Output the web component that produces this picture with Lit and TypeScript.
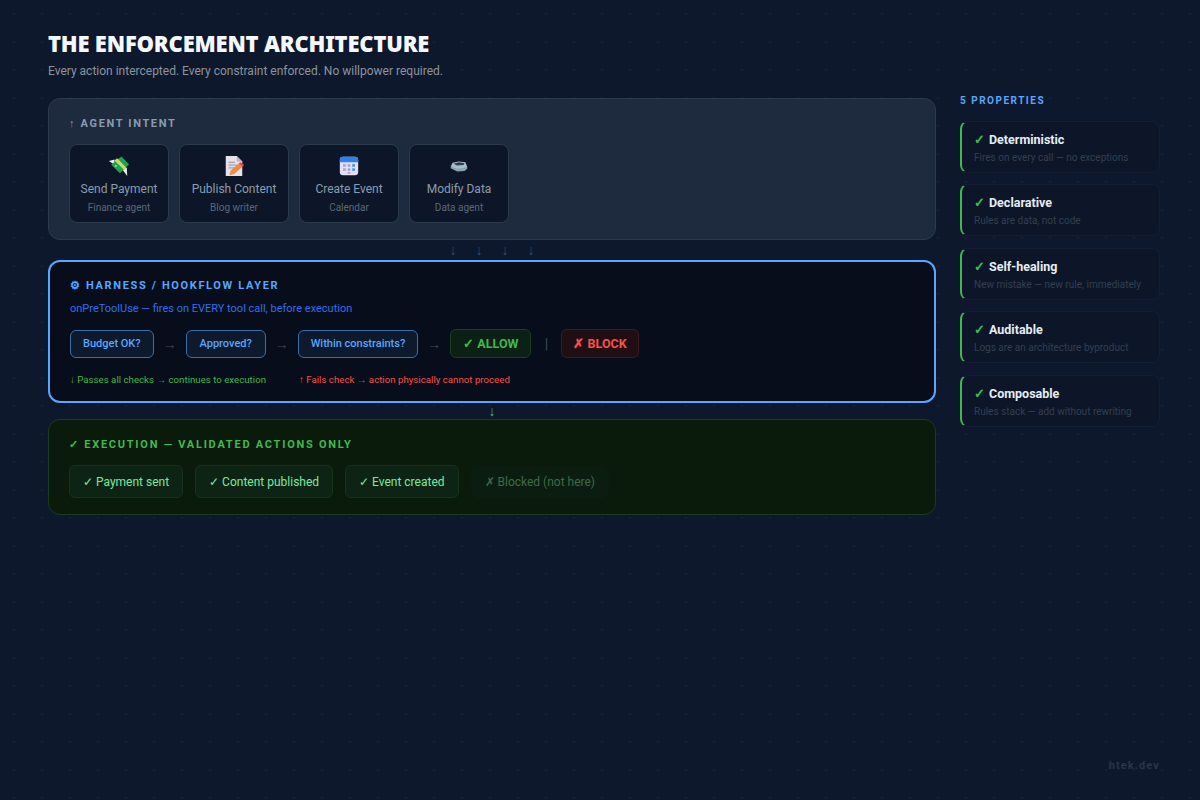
import { LitElement, html, css, svg } from "lit";
import { customElement } from "lit/decorators.js";

const money = svg`<svg class="ico" viewBox="0 0 24 24">
    <path d="M15 15l5.500-1 .5 9z" fill="#e8edf2"/>
    <path d="M1 6.500l6-1.500.5 6z" fill="#e8edf2"/>
    <path d="M3.500 10.500L14.500 1.500l8.500 8.500-10 10z" fill="#1fa34f"/>
    <path d="M7 6L18 16.500l2-2.500L10 3.500z" fill="#c9d96a"/>
    <circle cx="8.500" cy="12" r="1.200" fill="#8fe0a8"/>
</svg>`;

const memo = svg`<svg class="ico" viewBox="0 0 24 24">
    <path d="M3 1h12l6 6v16H3z" fill="#e6e0ea"/>
    <path d="M15 1l6 6h-6z" fill="#b9b2c4"/>
    <path d="M6 8h7M6 11h10M6 14h7" stroke="#a59fb0" stroke-width="1.200"/>
    <path d="M7 22l1.500-5L17 9.500l4 3.500-8.500 7.500z" fill="#f08a3c"/>
    <path d="M17 9.500l2-2 4 3.500-2 2z" fill="#e8476a"/>
</svg>`;

const calendar = svg`<svg class="ico" viewBox="0 0 24 24">
    <rect x="2" y="2" width="20" height="20" rx="3.500" fill="#e4dff5"/>
    <path d="M2 8V5.500A3.500 3.500 0 0 1 5.500 2h13A3.500 3.500 0 0 1 22 5.500V8z" fill="#2f7ff0"/>
    <g fill="#a9a4cc">
        <rect x="5.500" y="10" width="3" height="2.800"/>
        <rect x="10.500" y="10" width="3" height="2.800"/>
        <rect x="5.500" y="14.500" width="3" height="2.800"/>
        <rect x="10.500" y="14.500" width="3" height="2.800"/>
        <rect x="10.500" y="18.500" width="3" height="2"/>
    </g>
    <g fill="#4d8fe8">
        <rect x="15.500" y="10" width="3" height="2.800"/>
        <rect x="15.500" y="14.500" width="3" height="2.800"/>
    </g>
</svg>`;

const tray = svg`<svg class="ico" viewBox="0 0 24 24">
    <path d="M3 12.500L5 8.500 12 7l7 1 2 5-3 3.500-8 .5z" fill="#a9bccd"/>
    <path d="M6 9.500l6-1.500 6 1-1 2-7 .5z" fill="#2e3f52"/>
    <path d="M3 12.500l7 2.500 8-1 3-1v2l-3 2.500-8 .5-7-3.500z" fill="#8ba1b4"/>
</svg>`;

const intents = [
    { icon: money, name: "Send Payment", who: "Finance agent" },
    { icon: memo, name: "Publish Content", who: "Blog writer" },
    { icon: calendar, name: "Create Event", who: "Calendar" },
    { icon: tray, name: "Modify Data", who: "Data agent" },
];

const props = [
    { name: "Deterministic", desc: "Fires on every call — no exceptions" },
    { name: "Declarative", desc: "Rules are data, not code" },
    { name: "Self-healing", desc: "New mistake — new rule, immediately" },
    { name: "Auditable", desc: "Logs are an architecture byproduct" },
    { name: "Composable", desc: "Rules stack — add without rewriting" },
];

@customElement("app-root")
export default class AppRoot extends LitElement {
    static styles = css`
        :host {
            display: block;
            position: relative;
            width: 1200px;
            height: 800px;
            overflow: hidden;
            box-sizing: border-box;
            padding: 31px 40px 0 48px;
            background-color: #0e182c;
            background-image: radial-gradient(circle, #152036 1px, transparent 1px);
            background-size: 28px 28px;
            font-family: Roboto, "Noto Sans", sans-serif;
            color: #e6edf3;
        }
        * {
            box-sizing: border-box;
        }
        h1 {
            margin: 0;
            font-family: "Noto Sans", sans-serif;
            font-size: 22px;
            line-height: 24px;
            font-weight: 900;
            letter-spacing: -0.2px;
            color: #f4f7fb;
        }
        .sub {
            margin-top: 5px;
            height: 34px;
            font-size: 12px;
            line-height: 22px;
            color: #8b949e;
        }
        .cols {
            display: flex;
            gap: 24px;
        }
        .main {
            width: 888px;
            padding-top: 4px;
        }
        .side {
            width: 200px;
            display: flex;
            flex-direction: column;
            gap: 11.500px;
        }
        .layer {
            border-radius: 12px;
            padding: 17px 20px;
        }
        .label {
            font-size: 11px;
            line-height: 15px;
            font-weight: 700;
            letter-spacing: 1.650px;
        }
        .intent {
            height: 142px;
            background: #1e2a3d;
            border: 1px solid #2c3a4e;
        }
        .intent .label {
            color: #8b9cb0;
        }
        .intent-row {
            display: grid;
            grid-template-columns: 100px 110px 100px 100px;
            gap: 10px;
            margin-top: 13px;
        }
        .intent-card {
            height: 79px;
            padding-top: 10px;
            text-align: center;
            background: #0d1628;
            border: 1px solid #2c3a4e;
            border-radius: 8px;
        }
        .ico {
            display: block;
            width: 22px;
            height: 22px;
            margin: 0 auto;
        }
        .intent-name {
            margin-top: 4px;
            font-size: 12px;
            line-height: 17px;
            color: #8b9cb0;
        }
        .intent-who {
            margin-top: 4px;
            font-size: 10px;
            line-height: 12px;
            color: #59677a;
        }
        .arrows {
            height: 20px;
            display: flex;
            justify-content: center;
            gap: 18px;
            font-size: 14px;
            line-height: 20px;
            color: #3d4a5c;
        }
        .arrows span {
            width: 8px;
            text-align: center;
        }
        .arrows.green {
            height: 16px;
            line-height: 16px;
            color: #3fb950;
        }
        .harness {
            height: 143px;
            background: #070d1a;
            border: 2px solid #58a6ff;
            padding: 16px 20px;
        }
        .harness .label {
            color: #58a6ff;
        }
        .hook {
            margin-top: 8px;
            font-size: 11px;
            line-height: 16px;
            color: #2f6fed;
        }
        .flow {
            display: flex;
            align-items: center;
            margin-top: 12px;
        }
        .check {
            height: 28px;
            min-width: 80px;
            padding: 0 12px;
            text-align: center;
            font-size: 11px;
            font-weight: 500;
            line-height: 26px;
            color: #58a6ff;
            background: #0d1a2e;
            border: 1px solid #3b6ea8;
            border-radius: 6px;
        }
        .sep {
            width: 32px;
            text-align: center;
            font-size: 14px;
            color: #3d4a5c;
        }
        .verdict {
            height: 29px;
            padding: 0 12px;
            font-size: 12.500px;
            font-weight: 700;
            line-height: 27px;
            border-radius: 6px;
        }
        .allow {
            color: #3fb950;
            background: #0c2015;
            border: 1px solid #1b3d24;
        }
        .block {
            padding: 0 11px;
            color: #f85149;
            background: #1f0f14;
            border: 1px solid #3f1a1f;
        }
        .bar {
            width: 30px;
            text-align: center;
            font-size: 14px;
            color: #3d4a5c;
        }
        .notes {
            display: flex;
            gap: 33px;
            margin-top: 15px;
            font-size: 9.700px;
            line-height: 14px;
        }
        .pass {
            color: #3fb950;
        }
        .fail {
            color: #f85149;
        }
        .exec {
            height: 96px;
            background: #0a1b0c;
            border: 1px solid #1b3a22;
        }
        .exec .label {
            color: #3fb950;
            letter-spacing: 1.750px;
        }
        .exec-row {
            display: flex;
            gap: 12px;
            margin-top: 13px;
        }
        .done {
            height: 33px;
            padding: 0 13px;
            font-size: 12px;
            line-height: 33px;
            color: #7ee7a0;
            background: #0d2414;
            border: 1px solid #16331e;
            border-radius: 6px;
        }
        .done.off {
            color: #3f6b47;
            background: #0b1d10;
            border-color: #0b1d10;
        }
        .side-title {
            height: 14px;
            margin-bottom: 1px;
            font-size: 10px;
            line-height: 14px;
            font-weight: 700;
            letter-spacing: 1.500px;
            color: #58a6ff;
        }
        .prop {
            height: 52px;
            padding: 10px 12px;
            background: #0d1628;
            border: 1px solid #141e32;
            border-left: 2px solid #3fb950;
            border-radius: 8px;
        }
        .prop-name {
            font-size: 12.500px;
            line-height: 16px;
            font-weight: 700;
            color: #e6edf3;
        }
        .tick {
            color: #3fb950;
            margin-right: 4px;
            font-size: 13px;
        }
        .prop-desc {
            margin-top: 4px;
            font-size: 10px;
            line-height: 12px;
            color: #333e50;
        }
        .brand {
            position: absolute;
            right: 40px;
            bottom: 27px;
            font-size: 11px;
            line-height: 15px;
            font-weight: 700;
            letter-spacing: 1.100px;
            color: #2a3547;
        }
    `;

    render() {
        return html`
            <h1>THE ENFORCEMENT ARCHITECTURE</h1>
            <div class="sub">Every action intercepted. Every constraint enforced. No willpower required.</div>
            <div class="cols">
                <div class="main">
                    <div class="layer intent">
                        <div class="label">↑ AGENT INTENT</div>
                        <div class="intent-row">
                            ${intents.map(
                                (i) => html`
                                    <div class="intent-card">
                                        ${i.icon}
                                        <div class="intent-name">${i.name}</div>
                                        <div class="intent-who">${i.who}</div>
                                    </div>
                                `,
                            )}
                        </div>
                    </div>
                    <div class="arrows"><span>↓</span><span>↓</span><span>↓</span><span>↓</span></div>
                    <div class="layer harness">
                        <div class="label">⚙ HARNESS / HOOKFLOW LAYER</div>
                        <div class="hook">onPreToolUse — fires on EVERY tool call, before execution</div>
                        <div class="flow">
                            <div class="check">Budget OK?</div>
                            <div class="sep">→</div>
                            <div class="check">Approved?</div>
                            <div class="sep">→</div>
                            <div class="check">Within constraints?</div>
                            <div class="sep">→</div>
                            <div class="verdict allow">✓ ALLOW</div>
                            <div class="bar">|</div>
                            <div class="verdict block">✗ BLOCK</div>
                        </div>
                        <div class="notes">
                            <div class="pass">↓ Passes all checks → continues to execution</div>
                            <div class="fail">↑ Fails check → action physically cannot proceed</div>
                        </div>
                    </div>
                    <div class="arrows green"><span>↓</span></div>
                    <div class="layer exec">
                        <div class="label">✓ EXECUTION — VALIDATED ACTIONS ONLY</div>
                        <div class="exec-row">
                            <div class="done">✓ Payment sent</div>
                            <div class="done">✓ Content published</div>
                            <div class="done">✓ Event created</div>
                            <div class="done off">✗ Blocked (not here)</div>
                        </div>
                    </div>
                </div>
                <div class="side">
                    <div class="side-title">5 PROPERTIES</div>
                    ${props.map(
                        (p) => html`
                            <div class="prop">
                                <div class="prop-name"><span class="tick">✓</span>${p.name}</div>
                                <div class="prop-desc">${p.desc}</div>
                            </div>
                        `,
                    )}
                </div>
            </div>
            <div class="brand">htek.dev</div>
        `;
    }
}
